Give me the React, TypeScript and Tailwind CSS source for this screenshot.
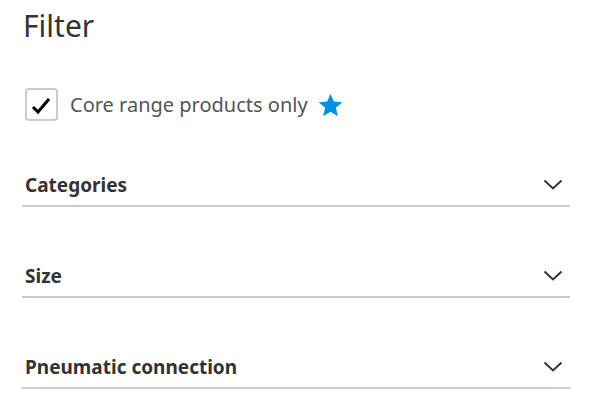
const sections = ['Categories', 'Size', 'Pneumatic connection'];

function Chevron() {
  return (
    <svg width="20" height="12" viewBox="0 0 20 12" className="mt-[8px]">
      <path d="M1.5 1.5 L10 9.5 L18.5 1.5" fill="none" stroke="#333" strokeWidth="2" />
    </svg>
  );
}

export default function App() {
  return (
    <div className="w-[600px] h-[400px] bg-white overflow-hidden pl-[22px] pr-[30px] pt-[4px]" style={{ fontFamily: '"Noto Sans", "Open Sans", sans-serif' }}>
      <h1 className="text-[30px] leading-[44px] text-[#333] pl-[1px]">Filter</h1>

      <label className="flex items-center mt-[40px] pl-[3px]">
        <span className="w-[33px] h-[33px] rounded-[4px] border-2 border-[#c8ccd3] flex items-center justify-center">
          <svg width="20" height="18" viewBox="0 0 20 18" className="mt-[3px] -ml-[2px]">
            <path d="M2 10 L7 15 L18 2" fill="none" stroke="#000" strokeWidth="3" strokeLinejoin="miter" />
          </svg>
        </span>
        <span className="ml-[12px] text-[20px] text-[#555] leading-none">Core range products only</span>
        <svg className="ml-[9px]" width="27" height="26" viewBox="0 0 24 24">
          <path d="M12 1.5l3.1 7.2 7.8.7-5.9 5.2 1.8 7.7L12 18.2l-6.8 4.1 1.8-7.7L1.1 9.4l7.8-.7z" fill="#0091dc" />
        </svg>
      </label>

      <div className="mt-[36px]">
        {sections.map((s) => (
          <div key={s} className="flex items-center justify-between h-[50px] mt-[41px] first:mt-0 border-b-2 border-[#c8ccd3] pl-[3px] pr-[7px]">
            <span className="text-[19px] font-bold text-[#333] pt-[8px]">{s}</span>
            <Chevron />
          </div>
        ))}
      </div>
    </div>
  );
}
